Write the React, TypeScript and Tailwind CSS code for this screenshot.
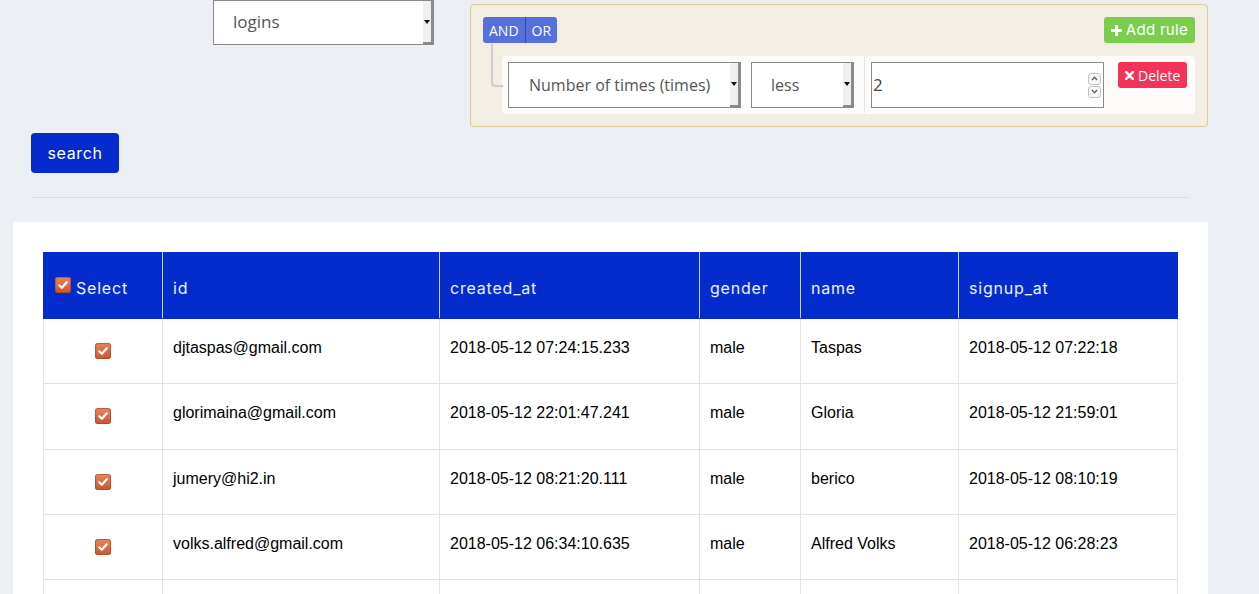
import React from "react";

const rows = [
  ["djtaspas@gmail.com", "2018-05-12 07:24:15.233", "male", "Taspas", "2018-05-12 07:22:18"],
  ["glorimaina@gmail.com", "2018-05-12 22:01:47.241", "male", "Gloria", "2018-05-12 21:59:01"],
  ["jumery@hi2.in", "2018-05-12 08:21:20.111", "male", "berico", "2018-05-12 08:10:19"],
  ["volks.alfred@gmail.com", "2018-05-12 06:34:10.635", "male", "Alfred Volks", "2018-05-12 06:28:23"],
  ["", "", "", "", ""],
];

function Check() {
  return (
    <span className="inline-flex h-[16px] w-[16px] items-center justify-center rounded-[3px] bg-gradient-to-b from-[#e8865c] to-[#c9552e] shadow-[inset_0_0_0_1px_rgba(150,60,30,0.5)]">
      <svg width="12" height="12" viewBox="0 0 12 12">
        <path d="M2.2 6.3 L4.8 8.8 L9.8 3.2" fill="none" stroke="white" strokeWidth="2.2" strokeLinecap="round" strokeLinejoin="round" />
      </svg>
    </span>
  );
}

function FakeSelect({ label, className, textClass }: { label: string; className: string; textClass: string }) {
  return (
    <div className={`flex items-stretch border border-[#8a8a8a] bg-white ${className}`}>
      <div className={`flex flex-1 items-center text-[#555] ${textClass}`} style={{ fontFamily: '"Open Sans", sans-serif' }}>
        {label}
      </div>
      <div className="flex w-[10px] items-center justify-center border-r-2 border-b-2 border-[#8a8a8a] bg-[#efefef]">
        <svg width="6" height="4" viewBox="0 0 6 4">
          <path d="M0 0 L6 0 L3 4 Z" fill="#111" />
        </svg>
      </div>
    </div>
  );
}

export default function App() {
  const cols = [119, 277, 260, 101, 158, 219];
  const heads = ["id", "created_at", "gender", "name", "signup_at"];
  return (
    <div className="min-h-[594px] w-full overflow-hidden bg-[#eceff4]" style={{ fontFamily: '"Liberation Sans", Arial, sans-serif' }}>
      <div className="px-[31px]">
        <div className="flex items-start">
          <FakeSelect label="logins" className="ml-[182px] h-[45px] w-[221px]" textClass="pl-[19px] pb-[1px] text-[17px]" />
          <div className="relative ml-[36px] mt-[4px] w-[738px] rounded-[4px] border border-[#dccb9c] bg-[#f2eee3] p-[12px]">
            <div className="flex items-center justify-between">
              <div className="flex h-[26px] overflow-hidden rounded-[3px] text-[14px] text-white" style={{ fontFamily: '"Open Sans", sans-serif' }}>
                <span className="flex items-center bg-[#5570d9] px-[6px]">AND</span>
                <span className="w-px bg-[#2e46c4]" />
                <span className="flex items-center bg-[#5570d9] px-[6px]">OR</span>
              </div>
              <button className="flex h-[26px] items-center gap-[4px] rounded-[3px] bg-[#7bce4c] px-[7px] text-[15px] tracking-[0.02em] text-white" style={{ fontFamily: 'Inter, sans-serif' }}>
                <svg width="11" height="11" viewBox="0 0 11 11"><path d="M4 0h3v4h4v3H7v4H4V7H0V4h4z" fill="white" /></svg>
                Add rule
              </button>
            </div>
            <div className="absolute left-[20px] top-[39px] h-[43px] w-[12px] rounded-bl-[4px] border-b-2 border-l-2 border-[#cccccc]" />
            <div className="ml-[19px] mt-[13px] flex items-start rounded-[4px] bg-[#fdfcfa] p-[6px]">
              <FakeSelect label="Number of times (times)" className="h-[46px] w-[233px]" textClass="pl-[20px] text-[16px]" />
              <FakeSelect label="less" className="ml-[10px] h-[46px] w-[103px]" textClass="pl-[19px] text-[16px]" />
              <div className="ml-[10px] -my-[5px] h-[56px] w-px bg-[#e4e4e4]" />
              <div className="ml-[6px] flex h-[46px] w-[233px] items-center border border-[#8a8a8a] bg-white pl-[1px] pr-[2px]">
                <span className="flex-1 text-[17px] text-[#444]" style={{ fontFamily: '"Open Sans", sans-serif' }}>2</span>
                <div className="flex flex-col gap-[1px]">
                  <span className="flex h-[12px] w-[13px] items-center justify-center rounded-[3px] border border-[#c4c4c4] bg-[#f7f7f7]">
                    <svg width="7" height="5" viewBox="0 0 7 5"><path d="M1 4 L3.5 1.2 L6 4" fill="none" stroke="#555" strokeWidth="1.2" /></svg>
                  </span>
                  <span className="flex h-[12px] w-[13px] items-center justify-center rounded-[3px] border border-[#c4c4c4] bg-[#f7f7f7]">
                    <svg width="7" height="5" viewBox="0 0 7 5"><path d="M1 1 L3.5 3.8 L6 1" fill="none" stroke="#555" strokeWidth="1.2" /></svg>
                  </span>
                </div>
              </div>
              <button className="ml-[14px] flex h-[26px] items-center gap-[4px] rounded-[3px] bg-[#f3335a] px-[7px] text-[14px] text-white" style={{ fontFamily: '"Open Sans", sans-serif' }}>
                <svg width="9" height="9" viewBox="0 0 9 9"><path d="M1.2 1.2 L7.8 7.8 M7.8 1.2 L1.2 7.8" stroke="white" strokeWidth="2.6" strokeLinecap="round" /></svg>
                Delete
              </button>
            </div>
          </div>
        </div>
        <button className="mt-[6px] h-[40px] w-[88px] rounded-[4px] bg-[#052bcc] text-[16px] tracking-[0.04em] text-white" style={{ fontFamily: 'Inter, sans-serif' }}>
          search
        </button>
        <div className="mt-[24px] h-px w-[1159px] bg-[#dcdfe5]" />
      </div>
      <div className="ml-[13px] mt-[24px] w-[1195px] bg-white px-[30px] pt-[30px] pb-[20px]">
        <table className="table-fixed border-collapse" style={{ width: 1134 }}>
          <colgroup>
            {cols.map((w, i) => (
              <col key={i} style={{ width: w }} />
            ))}
          </colgroup>
          <thead>
            <tr className="h-[66px] bg-[#042ccc] text-left text-[16px] font-normal tracking-[0.05em] text-[#eef1ff]" style={{ fontFamily: 'Inter, sans-serif' }}>
              <th className="border border-[#042ccc] border-r-[#c9d2f5] pl-[11px] pt-[4px] font-normal">
                <span className="flex items-center gap-[5px]">
                  <span className="-mt-[6px]"><Check /></span>
                  Select
                </span>
              </th>
              {heads.map((h, i) => (
                <th key={h} className={`border border-[#042ccc] pl-[10px] pt-[4px] font-normal ${i < heads.length - 1 ? "border-r-[#c9d2f5]" : ""}`}>
                  {h}
                </th>
              ))}
            </tr>
          </thead>
          <tbody>
            {rows.map((r, ri) => (
              <tr key={ri} className="h-[65.3px] text-[16px] text-black">
                <td className="border border-[#e2e2e2] pt-[2px] text-center align-middle">
                  {r[0] ? <Check /> : null}
                </td>
                {r.map((c, ci) => (
                  <td key={ci} className="border border-[#e2e2e2] pl-[10px] pb-[6px] align-middle">
                    {c}
                  </td>
                ))}
              </tr>
            ))}
          </tbody>
        </table>
      </div>
    </div>
  );
}
